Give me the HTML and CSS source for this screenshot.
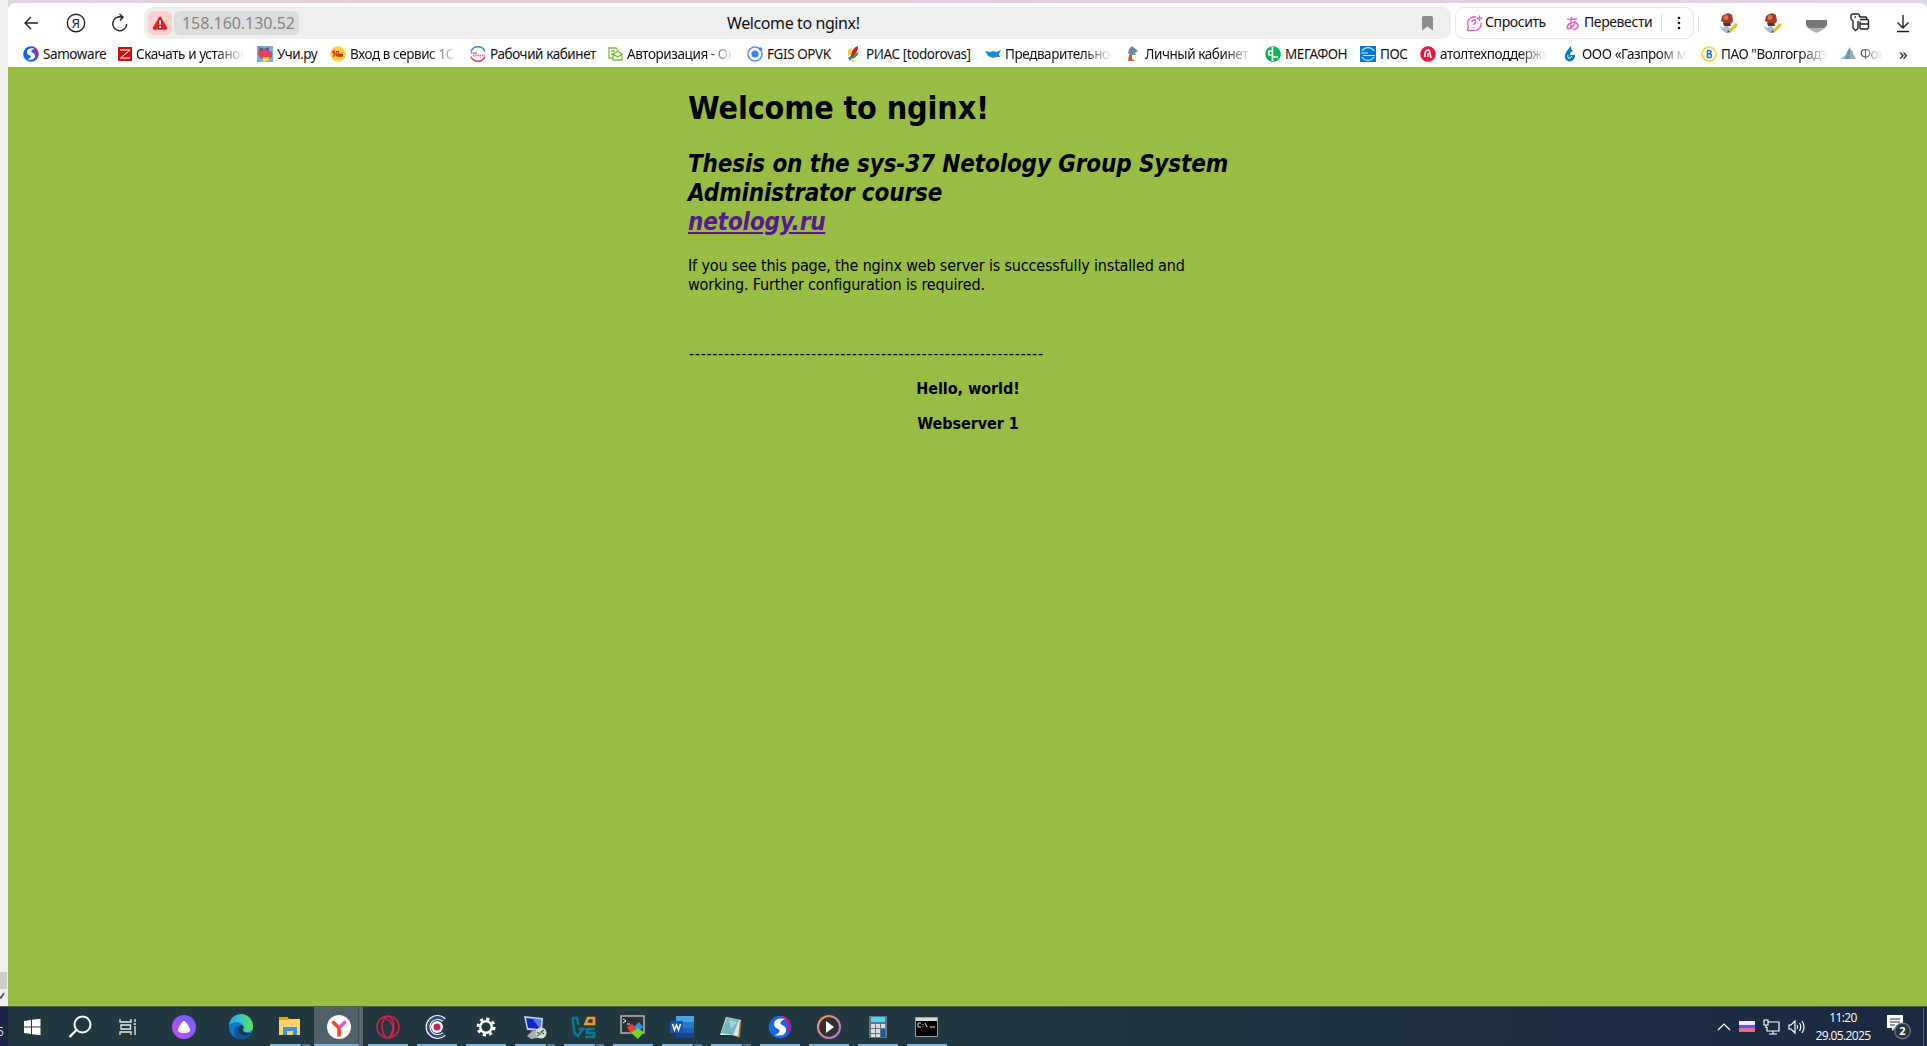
FILE: index.html
```html
<!DOCTYPE html>
<html lang="ru">
<head>
<meta charset="utf-8">
<title>Welcome to nginx!</title>
<link rel="stylesheet" href="styles.css">
</head>
<body>
<div class="desktop">
  <div class="workspace">
    <aside class="edge">
      <div class="edge-thumb"></div>
      <div class="edge-arrow"><svg width="8" height="17" viewBox="0 0 8 17"><path d="M-2 6 1 9 4 4" fill="none" stroke="#555" stroke-width="1.6"/></svg></div>
    </aside>
    <main class="browser">
      <header class="chrome">
        <div class="toolbar">
          <nav class="nav">
            <svg width="18" height="18" viewBox="0 0 18 18"><path d="M15 9H2M8 3 2 9 8 15" class="ink"/></svg>
            <svg width="20" height="20" viewBox="0 0 20 20"><circle cx="10" cy="10" r="8.700" class="ink"/><text x="10" y="14.500" text-anchor="middle" class="ya">Я</text></svg>
            <svg width="18" height="20" viewBox="0 0 18 20"><path d="M10.500 4A7 7 0 1 0 15.700 11M6.500 4H11.500M8.500 1 12 4 9 7.500" class="ink"/></svg>
          </nav>
          <div class="address">
            <span class="warn"><svg width="16" height="14" viewBox="0 0 16 14"><path d="M7 1.200Q8-.3 9 1.200L15.300 11.800Q15.600 13.500 14.300 13.700H1.700Q.4 13.500.7 11.800Z" fill="#e02027"/><path d="M8 4.200V8.500M8 10V12" stroke="#fff" stroke-width="1.900"/></svg></span>
            <span class="host"><span class="t-host">158.160.130.52</span></span>
            <span class="title">Welcome to nginx!</span>
            <svg class="flag" width="11" height="15" viewBox="0 0 11 15"><path d="M1.500 0H9.500Q11 0 11 1.500V14.500L5.500 10.500 0 14.500V1.500Q0 0 1.500 0Z" fill="#8d8d8d"/></svg>
          </div>
          <div class="assist">
            <svg width="17" height="17" viewBox="0 0 17 17"><path d="M10 2A6.800 6.800 0 0 0 2.300 11.500L1.500 15.500H8.500A6.500 6.500 0 0 0 15 7.500M13.500.5V6M10.800 3.200H16.200M6 7Q6 4.800 8 5T9.500 7.500Q8 8.300 7.700 10M7.500 12V13" fill="none" stroke="#f25cc5" stroke-width="1.400"/></svg>
            <span class="t-ask">Спросить</span>
            <span class="kana">あ</span>
            <span class="t-trans">Перевести</span>
            <i class="sep"></i>
            <svg width="4" height="16" viewBox="0 0 4 16"><g fill="#111"><circle cx="2" cy="3" r="1.300"/><circle cx="2" cy="8" r="1.300"/><circle cx="2" cy="13" r="1.300"/></g></svg>
          </div>
          <i class="sep tall"></i>
          <div class="ext">
            <svg width="21" height="21" viewBox="0 0 21 21"><path d="M1 12 5 15 9 12 14 18 8 20 4 17Z" fill="#a9bdd2"/><path d="M4 3Q10-2 14 2L15 8Q13 12 8 11L3 8Z" fill="#a83923"/><circle cx="8" cy="4.500" r="2.500" fill="#d4775c"/><path d="M5 10H12L13 13H6Z" fill="#5c3028"/><path d="M10 18 18 10 20 12 12 20Z" fill="#e4bd27"/><path d="m9 20 1-3 2 2Z" fill="#555"/></svg>
            <svg width="21" height="21" viewBox="0 0 21 21"><path d="M1 12 5 15 9 12 14 18 8 20 4 17Z" fill="#a9bdd2"/><path d="M4 3Q10-2 14 2L15 8Q13 12 8 11L3 8Z" fill="#a83923"/><circle cx="8" cy="4.500" r="2.500" fill="#d4775c"/><path d="M5 10H12L13 13H6Z" fill="#5c3028"/><path d="M10 18 18 10 20 12 12 20Z" fill="#e4bd27"/><path d="m9 20 1-3 2 2Z" fill="#555"/></svg>
            <svg width="21" height="21" viewBox="0 0 21 21"><path d="M0 7H21V12Q20 16 10.500 20 1 16 0 12Z" fill="#b0b0b0"/><path d="M0 7H21V12L18 15H3L0 12Z" fill="#777"/></svg>
            <svg width="20" height="20" viewBox="0 0 20 20"><path d="M9.500 4V3Q9.500 1 7.500 1H3Q1 1 1 3V6L3 8V15L5.500 17.500 8 15.500V8M4.500 4H6M9.500 4H15.500Q17 4 17 6.500M10 6.500H17Q18.500 6.500 18.500 8V14Q18.500 16 17 16H11.500Q10 16 10 14V8.500M10 11H18.500" class="ink"/></svg>
            <svg width="14" height="20" viewBox="0 0 14 20"><path d="M7 2V15M1.500 9.500 7 15 12.500 9.500M1 18.500H13" class="ink"/></svg>
          </div>
        </div>
        <div class="bookmarks">
          <div class="bm b1"><svg width="16" height="16" viewBox="0 0 16 16"><circle cx="8" cy="8" r="7.800" fill="#1268f5"/><path d="M9 .5A7.500 7.500 0 0 1 13 13Q15 7 9 .5Z" fill="#d01768"/><path d="M11.500 2.500Q4 1.500 4 6 4 8.500 7 9.500 9.500 11 4.500 13.500 12 14.500 12 10 12 7.500 9 6.500 6.500 5 11.500 2.500Z" fill="#fff"/></svg><span>Samoware</span></div>
          <div class="bm fade b2"><svg width="14" height="14" viewBox="0 0 14 14"><path d="M0 0H14V14H0Z" fill="#cf1010"/><path d="M2 3H12L2.500 11H12" fill="none" stroke="#fff"/></svg><span>Скачать и установ</span></div>
          <div class="bm b3"><svg width="16" height="16" viewBox="0 0 16 16"><path d="M0 0H16V16H0Z" fill="#69b4d8"/><path d="M2 0 5 3 9 2 12 1V5L15 6V11L10 14 3 12 1 8Z" fill="#e6405b"/><path d="M3 2H6V5H3ZM9 2H12V5H9Z" fill="#595b91"/><path d="M6 11H12V14L8 16H6Z" fill="#ffd337"/></svg><span>Учи.ру</span></div>
          <div class="bm fade b4"><svg width="16" height="16" viewBox="0 0 16 16"><circle cx="8" cy="8" r="7.800" fill="#fcd646"/><path d="M2 6.500 4 5V11M9 6Q6 4 6 8 6 10 8 10H13M9 7.500Q7.500 7 8 8.500H13" fill="none" stroke="#d9281f" stroke-width="1.400"/></svg><span>Вход в сервис 1С</span></div>
          <div class="bm b5"><svg width="16" height="16" viewBox="0 0 16 16"><path d="M1 5.500A7.500 7.500 0 0 1 15 5.500" fill="none" stroke="#3d86c6" stroke-width="1.500"/><path d="M1 10.500A7.500 7.500 0 0 0 15 10.500" fill="none" stroke="#ee4060" stroke-width="1.500"/><path d="M1 7H7M3 9.500H15" stroke="#d5789c" stroke-width="2" stroke-dasharray="1.500 .7"/></svg><span>Рабочий кабинет</span></div>
          <div class="bm fade b6"><svg width="15" height="14" viewBox="0 0 15 14"><path d="M5 11H1V1H8L10 4V5M3 4H7M3 7H5M5 7 9.500 4.500 14 7V13H5ZM5 7 9.500 10 14 7" fill="none" stroke="#7dbe3e" stroke-width="1.300"/></svg><span>Авторизация - Он</span></div>
          <div class="bm b7"><svg width="16" height="16" viewBox="0 0 16 16"><circle cx="8" cy="8" r="7" fill="none" stroke="#5290ff" stroke-width="1.500"/><circle cx="8" cy="8" r="3.600" fill="#3880ff"/><circle cx="13.500" cy="3" r="1.700" fill="#3880ff"/></svg><span>FGIS OPVK</span></div>
          <div class="bm b8"><svg width="13" height="16" viewBox="0 0 13 16"><path d="M1 4 5 2 4 8 1 10Z" fill="#e9d237"/><path d="M4 9Q5 2 11 0 12 5 3 14Z" fill="#d91c1c"/><path d="M5 12Q7 7 12 6 10 12 3 14Z" fill="#26a043"/><path d="M1 12 4 10 3 15Z" fill="#2a69b8"/><path d="M3 14 10 15 6 16Z" fill="#edb829"/></svg><span>РИАС [todorovas]</span></div>
          <div class="bm fade b9"><svg width="16" height="16" viewBox="0 0 16 16"><path d="M0 5 5 6 8 5 11 6 16 4 14 8 15 11H11L8 12 3 10Z" fill="#168cd0"/></svg><span>Предварительное</span></div>
          <div class="bm fade b10"><svg width="12" height="16" viewBox="0 0 12 16"><path d="M2 3 5 0 11 5 8 7 9 9H3L1 7Z" fill="#718895"/><path d="M2 9H5V13L8 15H1Z" fill="#e55322"/></svg><span>Личный кабинет П</span></div>
          <div class="bm b11"><svg width="16" height="16" viewBox="0 0 16 16"><circle cx="8" cy="8" r="7.800" fill="#08b554"/><path d="M7.500 1V15M7 5H4V9H7M8 11H13" fill="none" stroke="#fff" stroke-width="1.700"/></svg><span>МЕГАФОН</span></div>
          <div class="bm b12"><svg width="16" height="16" viewBox="0 0 16 16"><path d="M0 0H16V16H0Z" fill="#0878c9"/><path d="M2 5A7 7 0 0 1 14 5M2 11A7 7 0 0 0 14 11M1 7H8M3 9.500H15" fill="none" stroke="#c5e2f5" stroke-width="1.200"/></svg><span>ПОС</span></div>
          <div class="bm fade b13"><svg width="16" height="16" viewBox="0 0 16 16"><circle cx="8" cy="8" r="7.800" fill="#ed1738"/><path d="M5 11V8Q5 4 9 4L11 12M8 7V11" fill="none" stroke="#fff" stroke-width="1.700"/></svg><span>атолтехподдержк</span></div>
          <div class="bm fade b14"><svg width="12" height="16" viewBox="0 0 12 16"><path d="M7 0Q7 4 9 5 6 6 6 9H11Q11 15 5 15.500 0 14 1 9 2 5 7 0Z" fill="#0879c4"/><path d="M4 9Q3 13 6 12L8 10" fill="none" stroke="#fff"/></svg><span>ООО «Газпром ме</span></div>
          <div class="bm fade b15"><svg width="16" height="16" viewBox="0 0 16 16"><circle cx="8" cy="8" r="7" fill="#fff" stroke="#ffd22b" stroke-width="1.700"/><path d="M6.500 4.500V11.500M6 4.500H8Q10 4.500 10 6T8 7.800H6.500M8 7.800Q10.500 8 10.500 10T8 11.500H6" fill="none" stroke="#1d7cc4" stroke-width="1.600"/></svg><span>ПАО "Волгоградэ</span></div>
          <div class="bm fade b16"><svg width="15" height="14" viewBox="0 0 15 14"><path d="M0 11 5 8V12H0Z" fill="#84c2dd"/><path d="M4 12Q6 3 9 0V12Z" fill="#5c9fb6"/><path d="M9 1 12 5V12H9Z" fill="#a7aab0"/><path d="m12 7 3 5h-3Z" fill="#7eaec1"/></svg><span>Фон</span></div>
          <span class="more">»</span>
        </div>
      </header>
      <section class="page">
        <div class="column">
          <h1>Welcome to nginx!</h1>
          <h2>Thesis on the sys-37 Netology Group System<br>Administrator course<br><a href="#">netology.ru</a></h2>
          <p class="intro">If you see this page, the nginx web server is successfully installed and<br>working. Further configuration is required.</p>
          <p class="dashes">-------------------------------------------------------------</p>
          <p class="strong">Hello, world!</p>
          <p class="strong">Webserver 1</p>
        </div>
      </section>
    </main>
  </div>
  <footer class="taskbar">
    <div class="edge-bar">5</div>
    <div class="apps">
      <div class="app w48"><svg width="18" height="18" viewBox="0 0 18 18"><path d="M1 3 8 2V8.500H1ZM9 1.800 17.500.7V8.500H9ZM1 9.500H8V16L1 15ZM9 9.500H17.500V17.300L9 16.200Z" fill="#fff"/></svg></div>
      <div class="app w48"><svg width="24" height="24" viewBox="0 0 24 24"><circle cx="14.500" cy="9.500" r="8" fill="none" stroke="#fff" stroke-width="2"/><path d="M8.500 15 1.500 22" stroke="#fff" stroke-width="2.400"/></svg></div>
      <div class="app w48"><svg width="18" height="18" viewBox="0 0 18 18"><path d="M1 1V4H12V1M1 17V14H12V17M2 7H11.500V11H2ZM16 1V4M16 8V17M14.500 6H17" fill="none" stroke="#e6eaec" stroke-width="1.300"/></svg></div>
      <div class="app w64"><svg width="24" height="24" viewBox="0 0 24 24"><defs><linearGradient id="al" x1="1" y1="0" x2="0" y2="1"><stop stop-color="#6765ff"/><stop offset="1" stop-color="#c44cf5"/></linearGradient></defs><circle cx="12" cy="12" r="12" fill="url(#al)"/><path d="M12 6Q14 6 18 14 19 18 12 18T6 14Q10 6 12 6Z" fill="#fff"/></svg></div>
      <div class="app w50"><svg width="24" height="24" viewBox="0 0 24 24"><defs><linearGradient id="ed"><stop stop-color="#27a5df"/><stop offset=".5" stop-color="#32c8c4"/><stop offset="1" stop-color="#68df49"/></linearGradient></defs><circle cx="12" cy="12" r="12" fill="#0e78d2"/><path d="M0 10A12 12 0 0 1 24 12Q24 17 18 17 13 17 15 12 12 6 5 7.500 2 8 0 10Z" fill="url(#ed)"/><path d="M9 11Q8 21 20 20 15 25 9 23.500 3 20 6 13 7 11 9 11Z" fill="#0b54a0"/><path d="M15 12Q12 16 17 18 21 19 23 17L20 20Q10 22 9 14 10 10 13 10Z" fill="#213943"/></svg></div>
      <div class="app run split"><svg width="22" height="20" viewBox="0 0 22 20"><path d="M0 0H8L10 2H21V18H0Z" fill="#ffd465"/><path d="M0 0H8L10 3H0Z" fill="#e7a117"/><path d="M4 10H18V18H14V14H8V18H4Z" fill="#3b93d3"/></svg></div>
      <div class="app run active"><svg width="24" height="24" viewBox="0 0 24 24"><circle cx="12" cy="12" r="12" fill="#fff"/><path d="M5.500 6.500 12 13V21.500" fill="none" stroke="#fc3f1d" stroke-width="3.500"/><path d="m12.500 12.500 6-6" stroke="#f052cf" stroke-width="3.500"/></svg></div>
      <div class="app run"><svg width="24" height="24" viewBox="0 0 24 24"><g fill="none" stroke="#d6224a" stroke-width="1.500"><circle cx="12" cy="12" r="11"/><ellipse cx="12" cy="12" rx="6" ry="10.500"/><path d="M8 3Q22 8 14 21"/></g></svg></div>
      <div class="app run"><svg width="24" height="24" viewBox="0 0 24 24"><path d="M19 5A9.500 9.500 0 1 0 19 19" fill="none" stroke="#fff" stroke-width="5"/><path d="M19 5A9.500 9.500 0 1 0 19 19" fill="none" stroke="#354a87" stroke-width="2.800"/><circle cx="12" cy="12" r="6" fill="#fff"/><circle cx="12" cy="12" r="3.500" fill="#d41b4f"/></svg></div>
      <div class="app run"><svg width="20" height="20" viewBox="0 0 20 20"><circle cx="10" cy="10" r="8" fill="none" stroke="#fff" stroke-width="3" stroke-dasharray="3.140 3.140"/><circle cx="10" cy="10" r="5.800" fill="none" stroke="#fff" stroke-width="2.400"/></svg></div>
      <div class="app run split"><svg width="24" height="24" viewBox="0 0 24 24"><path d="M1 1 20 3 19 16 4 15Z" fill="#c9d1df"/><path d="M3 3 18 4.500 17 14 5 13Z" fill="#1525c9"/><path d="M9 3 18 4.500 17 14Z" fill="#587be5"/><path d="M9 16H15V19H20V22L8 24 4 21Z" fill="#a9b2bc"/><circle cx="18" cy="18" r="5.500" fill="#d8ded4"/><path d="m14 17 3 2-3 2m7-6-3 2 3 2" fill="none" stroke="#2c7a32" stroke-width="1.400"/></svg></div>
      <div class="app run split"><svg width="25" height="24" viewBox="0 0 25 24"><path d="M1.500 3H6L7.500 10M1.500 3 3.500 18 7 21 12 14H7.500M24 14H16V18H23V22H14" fill="none" stroke="#087b91" stroke-width="2.500"/><path d="M14.500 9 17 3H23V9Z" fill="none" stroke="#ef9823" stroke-width="2.700"/></svg></div>
      <div class="app run"><svg width="25" height="24" viewBox="0 0 25 24"><path d="M1 1H24V18H1Z" fill="#302f32" stroke="#b5b5b5" stroke-width="1.500"/><path d="m3 4 3 2-3 2M7 9H10" fill="none" stroke="#fff"/><path d="M7 12 12 9 16 13 11 19Z" fill="#ee4038"/><path d="m14 12 5-5 4 5-4 4Z" fill="#378df2"/><path d="m11 18 6-5 7 4-6 7Z" fill="#73d52a"/></svg></div>
      <div class="app run split"><svg width="24" height="24" viewBox="0 0 24 24"><path d="M6 1H24V23H6Z" fill="#2878c8"/><path d="M6 1H24V7H6Z" fill="#44a4e7"/><path d="M6 13H24V18H6Z" fill="#2060b0"/><path d="M6 18H24V23H6Z" fill="#164391"/><path d="M0 6H13V18H0Z" fill="#1954b0"/><path d="m2.500 9 2 6 2-5 2 5 2-6" fill="none" stroke="#fff" stroke-width="1.500"/></svg></div>
      <div class="app run split"><svg width="24" height="24" viewBox="0 0 24 24"><path d="M7 2 22 5 20 22 13 20 1 20Z" fill="#dbe9df"/><path d="M8 3 20 5 14 20 2 18Z" fill="#74b6be"/><path d="M10 5 18 7 12 14Z" fill="#a3d6da"/><path d="m21 6 1 1-1 15-2 1Z" fill="#a77a2c"/></svg></div>
      <div class="app run"><svg width="24" height="24" viewBox="0 0 16 16"><circle cx="8" cy="8" r="7.500" fill="#1268f5"/><path d="M9 .5A7.500 7.500 0 0 1 13 13Q15 7 9 .5Z" fill="#d01768"/><path d="M11.500 2.500Q4 1.500 4 6 4 8.500 7 9.500 9.500 11 4.500 13.500 12 14.500 12 10 12 7.500 9 6.500 6.500 5 11.500 2.500Z" fill="#fff"/></svg></div>
      <div class="app run"><svg width="24" height="24" viewBox="0 0 24 24"><defs><linearGradient id="md" x1="0" y1="0" x2="1" y2="1"><stop stop-color="#ff9d43"/><stop offset="1" stop-color="#a579ef"/></linearGradient></defs><circle cx="12" cy="12" r="11" fill="#303033" stroke="url(#md)" stroke-width="2"/><path d="m9 6 8 6-8 6Z" fill="#fff"/></svg></div>
      <div class="app run"><svg width="20" height="24" viewBox="0 0 20 24"><path d="M1 1H19V23H1Z" fill="#68757e"/><path d="M3 2H17V7H3Z" fill="#4ed1f4"/><path d="M3 9H7V13H3ZM8 9H12V13H8ZM13 9H17V13H13ZM3 14H7V18H3ZM8 14H12V18H8ZM3 19H7V22H3ZM8 19H12V22H8Z" fill="#d8dde0"/><path d="M13 14H17V22H13Z" fill="#125aa7"/></svg></div>
      <div class="app run"><svg width="23" height="20" viewBox="0 0 23 20"><path d="M.5.5H22.500V19.500H.5Z" fill="#000" stroke="#9ca3a7"/><path d="M1 1H22V4H1Z" fill="#d6d9da"/><path d="M6 6H3V10H6M8 7V8M8 9V10M10 6 12 10M15 10H20" fill="none" stroke="#ddd"/></svg></div>
    </div>
    <div class="tray">
      <svg width="14" height="8" viewBox="0 0 14 8"><path d="m1 7 6-6 6 6" class="white"/></svg>
      <svg width="16" height="11" viewBox="0 0 16 11"><path d="M0 0H16V4H0Z" fill="#eeeaf5"/><path d="M0 4H16V7H0Z" fill="#6655da"/><path d="M0 7H16V11H0Z" fill="#e86b8d"/></svg>
      <svg width="17" height="16" viewBox="0 0 17 16"><path d="M5 3H16V12H4V8M1 1H5V6H1ZM3 6V9M10 12V15M6 15H14" class="white"/></svg>
      <svg width="18" height="16" viewBox="0 0 18 16"><path d="M1 6H3L7 2V14L3 10H1ZM9 6Q10.500 8 9 10M11.500 4Q14 8 11.500 12M14 2Q18 8 14 14" class="white"/></svg>
      <div class="clock"><span>11:20</span><span>29.05.2025</span></div>
      <div class="notes"><svg width="24" height="26" viewBox="0 0 24 26"><path d="M0 1H16V14H8L5 17V14H0Z" fill="#fff"/><path d="M3 5H13M3 8H13M3 11H8" stroke="#1b2941" stroke-width="1.200"/><circle cx="15.500" cy="17" r="7.800" fill="#2a333d" stroke="#727c87" stroke-width="1.200"/><text x="15.500" y="21.200" text-anchor="middle" class="count">2</text></svg></div>
      <i class="show-desktop"></i>
    </div>
  </footer>
</div>
</body>
</html>
```
FILE: styles.css
```css
* { box-sizing: border-box; }
body { margin: 0; overflow: hidden; }
svg { display: block; flex: none; overflow: visible; }
.desktop { width: 1927px; height: 1046px; display: flex; flex-direction: column; overflow: hidden; }
.workspace { height: 1006px; display: flex; }
.edge { width: 8px; background: #efefef; display: flex; flex-direction: column; justify-content: flex-end; overflow: hidden; }
.edge-thumb { height: 17px; width: 7px; background: #cdcdcd; }
.edge-arrow { height: 17px; }
.browser { flex: 1; min-width: 0; display: flex; flex-direction: column; }
.chrome { height: 67px; padding-top: 3px; background: linear-gradient(90deg, #ddd5e2, #e6cdd0 25%, #e4cbd9 47%, #dfd0e5 60%, #dfd4e8); font-family: "Noto Sans", sans-serif; color: #111; }
.toolbar { height: 36px; background: #fff; border-radius: 7px 7px 0 0; display: flex; align-items: center; padding-top: 4px; }
.ink { fill: none; stroke: #222; stroke-width: 1.4; }
.ya { font: 13px "Noto Sans", sans-serif; fill: #222; }
.nav { width: 136px; padding-left: 15px; display: flex; gap: 25px; align-items: center; }
.address { width: 1307px; height: 32px; background: #efefef; border-radius: 9px; display: flex; align-items: center; padding: 0 18px 0 4px; }
.warn { width: 24px; height: 24px; border-radius: 6px; background: #fdd0d1; display: grid; place-items: center; }
.host { width: 125px; height: 24px; margin-left: 2px; border-radius: 6px; background: #ddd; color: #858585; padding-left: 8px; display: flex; align-items: center; font-size: 16px; letter-spacing: -.05px; white-space: nowrap; }
.title { margin-left: 428px; font-size: 16px; letter-spacing: -.4px; white-space: nowrap; }
.flag { margin-left: auto; }
.assist { width: 239px; height: 32px; margin-left: 4px; border: 1px solid #e5e5e5; border-radius: 9px; display: flex; align-items: center; padding-left: 10px; font-size: 14px; letter-spacing: -.4px; white-space: nowrap; }
.t-ask, .t-trans { line-height: 18px; padding-bottom: 2px; }
.t-ask { width: 59px; margin-left: 2px; }
.kana { width: 16px; margin-left: 21px; font: 500 15px/18px "Noto Sans CJK JP", sans-serif; color: #f25cc5; }
.t-trans { width: 66px; margin-left: 3px; }
.sep { width: 1px; height: 18px; background: #ddd; margin: 0 15px 0 11px; }
.sep.tall { margin: 0 0 0 4px; height: 16px; }
.ext { display: flex; align-items: center; gap: 23px; margin-left: 19px; }
.ext svg:last-child { margin-left: 3px; }
.bookmarks { height: 28px; background: #fff; display: flex; align-items: center; padding: 2px 0 0 15px; font-size: 13.5px; letter-spacing: -.42px; }
.bm { display: flex; align-items: center; gap: 4px; flex: none; height: 24px; white-space: nowrap; }
.fade { -webkit-mask-image: linear-gradient(90deg, #000 calc(100% - 28px), transparent); mask-image: linear-gradient(90deg, #000 calc(100% - 28px), transparent); }
.b1 { width: 82px; margin-right: 13px; }
.b2 { width: 126px; margin-right: 13px; }
.b3 { width: 61px; margin-right: 12px; }
.b4 { width: 127px; margin-right: 13px; }
.b5 { width: 125px; margin-right: 13px; }
.b6 { width: 126px; margin-right: 13px; }
.b7 { width: 87px; margin-right: 13px; }
.b8 { width: 125px; margin-right: 13px; }
.b9 { width: 127px; margin-right: 15px; }
.b10 { width: 125px; margin-right: 13px; }
.b11 { width: 83px; margin-right: 12px; }
.b12 { width: 48px; margin-right: 12px; }
.b13 { width: 127px; margin-right: 17px; }
.b14 { width: 123px; margin-right: 14px; }
.b15 { width: 127px; margin-right: 13px; }
.b16 { width: 42px; margin-right: 16px; }
.b8 { gap: 6px; }
.b10, .b14 { gap: 6px; }
.more { font-size: 17px; padding-bottom: 2px; }
.page { flex: 1; background: #99bc44; padding-top: 21px; color: #000; font-family: "DejaVu Sans Condensed", "DejaVu Sans", sans-serif; font-stretch: condensed; }
.column { width: 560px; margin-left: 680px; white-space: nowrap; }
h1 { margin: 0; font-size: 32px; line-height: 41px; letter-spacing: -.12px; }
h2 { margin: 21px 0 0; font-size: 24px; line-height: 29px; font-style: italic; letter-spacing: -.14px; }
h2 a { color: #551a8b; }
.intro { margin: 19px 0 0; font-size: 16px; line-height: 19px; letter-spacing: -.16px; }
.dashes { margin: 50px 0 0 1px; font-size: 16px; line-height: 19px; letter-spacing: .62px; }
.strong { margin: 16px 0 0; font-size: 16px; line-height: 19px; font-weight: bold; text-align: center; letter-spacing: -.05px; }
.taskbar { height: 40px; display: flex; background: linear-gradient(90deg, #223841 0, #223841 50%, #1d2d42 85%, #1b2941); border-top: 1px solid #4c6640; }
.edge-bar { width: 8px; background: #1a2545; color: #ddd; font: 12px/50px "Open Sans", sans-serif; text-indent: -3px; }
.apps { display: flex; flex: 1; }
.app { width: 49px; display: grid; place-items: center; position: relative; }
.w48 { width: 48px; }
.app.w48 svg { margin-right: 1px; }
.w64 { width: 64px; }
.w50 { width: 49px; }
.run::after { content: ""; position: absolute; left: 5px; right: 4px; bottom: 0; height: 2px; background: #76b5e3; }
.split::after { background: linear-gradient(90deg, #76b5e3 31px, #223841 31px, #223841 32px, #4e7d9d 32px); }
.active { background: linear-gradient(90deg, #50616a 44px, #35454d 44px, #5a6970 46px); }
.active::after { left: 0; }
.tray { display: flex; align-items: center; color: #fff; font-family: "Open Sans", sans-serif; }
.white { fill: none; stroke: #fff; stroke-width: 1.2; }
.tray svg { margin-right: 8px; }
.clock { width: 54px; margin-left: 2px; display: flex; flex-direction: column; align-items: center; font-size: 12px; letter-spacing: -.6px; line-height: 18px; white-space: nowrap; }
.notes { margin-left: 17px; }
.count { font: bold 11px "Open Sans", sans-serif; fill: #fff; }
.show-desktop { width: 1px; height: 38px; background: #59657a; margin-left: 4px; margin-right: 3px; }
```
